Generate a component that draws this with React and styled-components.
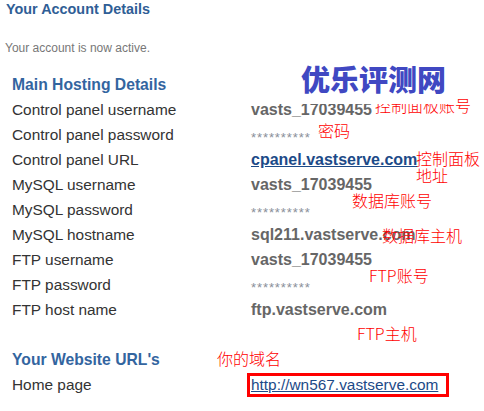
import React from "react";
import styled, { createGlobalStyle } from "styled-components";

const GlobalStyle = createGlobalStyle`
  body {
    margin: 0;
    background: #fff;
    font-family: "Liberation Sans", Arial, sans-serif;
  }
`;

const Page = styled.div`
  position: relative;
  width: 484px;
  height: 411px;
  padding-top: 1px;
  box-sizing: border-box;
  overflow: hidden;
  background: #fff;
`;

const PageTitle = styled.h2`
  margin: 0;
  padding-left: 6px;
  font-size: 14.4px;
  line-height: 17px;
  font-weight: bold;
  color: #2f5e96;
`;

const Notice = styled.p`
  margin: 23px 0 0;
  padding-left: 5px;
  font-size: 12px;
  line-height: 14px;
  color: #777;
`;

const SectionTitle = styled.h3`
  margin: ${(p) => p.$gap}px 0 0;
  padding-left: 12px;
  font-size: 15.7px;
  line-height: 25px;
  font-weight: bold;
  color: #33659f;
`;

const Table = styled.div`
  display: grid;
  grid-template-columns: 239px 1fr;
  grid-auto-rows: 25px;
  padding-left: 12px;
  align-items: center;
`;

const Label = styled.div`
  font-size: 15.4px;
  color: #333;
  white-space: nowrap;
`;

const Value = styled.div`
  font-size: 16px;
  font-weight: bold;
  color: #666;
  white-space: nowrap;
`;

const Hidden = styled.div`
  font-size: 13px;
  color: #8a8f99;
  letter-spacing: 0.9px;
  padding-top: 5px;
`;

const BoldLink = styled.a`
  font-size: 16px;
  font-weight: bold;
  color: #1c4a88;
  text-decoration: underline;
`;

const Boxed = styled.span`
  display: inline-block;
  margin-left: -4px;
  padding: 0 8px 0 1px;
  border: 3px solid #f00;
  line-height: 18px;
`;

const PlainLink = styled.a`
  font-size: 15.4px;
  color: #1c4a88;
  text-decoration: underline;
`;

const Logo = styled.div`
  position: absolute;
  left: 300px;
  top: 58px;
  width: 155px;
  height: 46px;
  box-sizing: border-box;
  padding-left: 1px;
  background: #fff;
  font-family: "Noto Sans CJK SC", sans-serif;
  font-weight: 900;
  font-size: 29px;
  line-height: 41px;
  color: #4048c2;
  z-index: 2;
`;

const Note = styled.div`
  position: absolute;
  left: ${(p) => p.$x}px;
  top: ${(p) => p.$y}px;
  font-family: "Noto Sans CJK SC", sans-serif;
  font-weight: 300;
  font-size: 16px;
  line-height: 17px;
  color: #f00;
  white-space: pre;
  z-index: 1;
`;

const rows = [
  ["Control panel username", "vasts_17039455"],
  ["Control panel password", null],
  ["Control panel URL", "link"],
  ["MySQL username", "vasts_17039455"],
  ["MySQL password", null],
  ["MySQL hostname", "sql211.vastserve.com"],
  ["FTP username", "vasts_17039455"],
  ["FTP password", null],
  ["FTP host name", "ftp.vastserve.com"],
];

const notes = [
  { x: 375, y: 97, text: "控制面板账号" },
  { x: 318, y: 122, text: "密码" },
  { x: 416, y: 150, text: "控制面板\n地址" },
  { x: 352, y: 192, text: "数据库账号" },
  { x: 382, y: 227, text: "数据库主机" },
  { x: 369, y: 267, text: "FTP账号" },
  { x: 357, y: 325, text: "FTP主机" },
  { x: 217, y: 350, text: "你的域名" },
];

export default function App() {
  return (
    <Page>
      <GlobalStyle />
      <PageTitle>Your Account Details</PageTitle>
      <Notice>Your account is now active.</Notice>
      <SectionTitle $gap={17}>Main Hosting Details</SectionTitle>
      <Table>
        {rows.map(([label, value]) => (
          <React.Fragment key={label}>
            <Label>{label}</Label>
            {value === null ? (
              <Hidden>**********</Hidden>
            ) : value === "link" ? (
              <Value>
                <BoldLink href="#">cpanel.vastserve.com</BoldLink>
              </Value>
            ) : (
              <Value>{value}</Value>
            )}
          </React.Fragment>
        ))}
      </Table>
      <SectionTitle $gap={25}>Your Website URL's</SectionTitle>
      <Table>
        <Label>Home page</Label>
        <div>
          <Boxed>
            <PlainLink href="#">http://wn567.vastserve.com</PlainLink>
          </Boxed>
        </div>
      </Table>
      <Logo>优乐评测网</Logo>
      {notes.map((n) => (
        <Note key={n.text} $x={n.x} $y={n.y}>
          {n.text}
        </Note>
      ))}
    </Page>
  );
}
